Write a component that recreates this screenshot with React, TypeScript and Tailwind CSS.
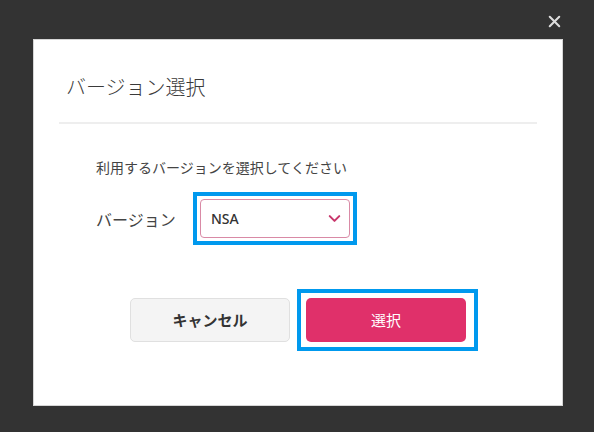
import { ChevronDown, X } from "lucide-react";

const jp = "font-['Noto_Sans_CJK_JP','Noto_Sans',sans-serif]";

export default function App() {
  return (
    <div className={`relative h-[432px] w-full overflow-hidden bg-[#333333] ${jp}`}>
      {/* close button */}
      <button className="absolute left-[545px] top-[12px] text-[#dddddd]">
        <X size={19} strokeWidth={2.6} />
      </button>

      {/* modal */}
      <div className="ml-[33px] mt-[39px] flex h-[367px] w-[530px] flex-col border border-[#d6d6d6] bg-white">
        <div className="px-[25px] pt-[32px]">
          <h2 className="pl-[7px] text-[20px] leading-[30px] font-light text-[#3a3a3a]">バージョン選択</h2>
          <div className="mt-[20px] h-[2px] bg-[#eeeeee]" />
        </div>

        <div className="pl-[62px] pt-[33px]">
          <p className="text-[14px] leading-[20px] text-[#444444]">利用するバージョンを選択してください</p>

          <div className="mt-[15px] flex items-center">
            <span className="w-[97px] text-[16px] leading-[24px] text-[#444444]">バージョン</span>
            <div className="border-4 border-[#0099ee] p-[3px]">
              <div className="flex h-[39px] w-[150px] items-center justify-between rounded-[4px] border border-[#d98aa6] pl-[10px] pr-[5px]">
                <span className="font-['Noto_Sans',sans-serif] text-[14px] font-medium text-[#333333]">NSA</span>
                <ChevronDown size={19} strokeWidth={2.6} className="text-[#c8366b]" />
              </div>
            </div>
          </div>
        </div>

        <div className="mt-[44px] flex items-center pl-[96px]">
          <button className="h-[44px] w-[160px] rounded-[5px] border border-[#e0e0e0] bg-[#f4f4f4] text-[15px] font-bold text-[#333333]">
            キャンセル
          </button>
          <div className="ml-[7px] border-4 border-[#0099ee] py-[5px] pl-[5px] pr-[8px]">
            <button className="block h-[44px] w-[160px] rounded-[5px] bg-[#e0306a] text-[15px] text-white">
              選択
            </button>
          </div>
        </div>
      </div>
    </div>
  );
}
